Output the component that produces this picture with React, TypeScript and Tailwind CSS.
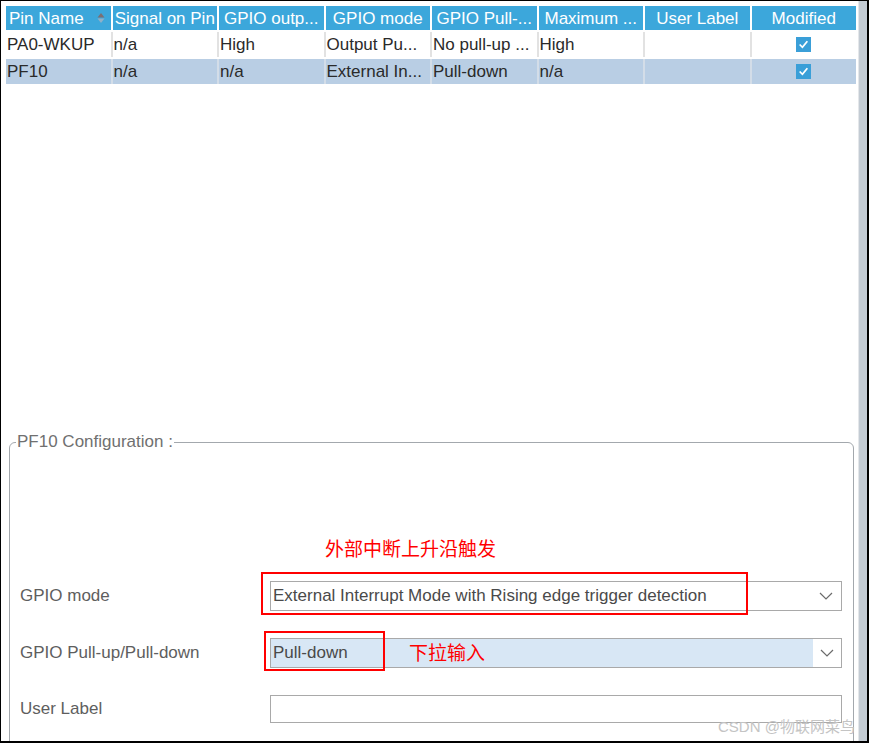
const headers = [
  "Signal on Pin",
  "GPIO outp...",
  "GPIO mode",
  "GPIO Pull-...",
  "Maximum ...",
  "User Label",
  "Modified",
];

const rows = [
  { cells: ["PA0-WKUP", "n/a", "High", "Output Pu...", "No pull-up ...", "High", ""], bg: "bg-white", sep: "bg-[#e2e2e2]" },
  { cells: ["PF10", "n/a", "n/a", "External In...", "Pull-down", "n/a", ""], bg: "bg-[#b9cee4]", sep: "bg-[#d3dde8]" },
];

const SortIcon = () => (
  <svg width="8" height="12" viewBox="0 0 8 12">
    <polygon points="4,1 7.5,5.5 0.5,5.5" fill="#7d6f72" />
    <polygon points="0.5,6.5 7.5,6.5 4,11" fill="#8fb0c8" />
  </svg>
);

const Check = () => (
  <div className="w-[15px] h-[15px] bg-[#3a9fd8] flex items-center justify-center">
    <svg width="11" height="11" viewBox="0 0 10 10">
      <polyline points="1.5,5 4,7.5 8.5,2" fill="none" stroke="white" strokeWidth="1.6" />
    </svg>
  </div>
);

const Chevron = () => (
  <svg width="14" height="8" viewBox="0 0 14 8">
    <polyline points="1,1 7,7 13,1" fill="none" stroke="#6b6b6b" strokeWidth="1.2" />
  </svg>
);

export default function App() {
  return (
    <div
      className="relative w-[869px] h-[743px] bg-white border border-black border-r-2 border-b-2 flex overflow-hidden"
      style={{ fontFamily: '"Liberation Sans", Arial, sans-serif' }}
    >
      <div className="flex-1 flex flex-col pt-[5px]">
        {/* table */}
        <div className="ml-[5px] w-[850px] flex flex-col gap-y-[2px] text-[17px]">
          <div className="grid grid-cols-8 gap-x-[2px] h-[24px]">
            <div className="bg-[#3ca7db] text-white flex items-center justify-between pl-[3px] pr-[6px] leading-none">
              <span>Pin Name</span>
              <SortIcon />
            </div>
            {headers.map((h) => (
              <div
                key={h}
                className="bg-[#3ca7db] text-white flex items-center justify-center overflow-hidden whitespace-nowrap leading-none"
              >
                {h}
              </div>
            ))}
          </div>
          {rows.map((r, i) => (
            <div key={i} className={`grid grid-cols-8 gap-x-[2px] h-[25px] ${r.sep}`}>
              {r.cells.map((c, j) => (
                <div
                  key={j}
                  className={`${r.bg} text-[#2a2a2a] flex items-center pl-[1px] overflow-hidden whitespace-nowrap leading-none`}
                >
                  {c}
                </div>
              ))}
              <div className={`${r.bg} flex items-center justify-center`}>
                <Check />
              </div>
            </div>
          ))}
        </div>

        {/* configuration group */}
        <fieldset className="ml-[8px] mt-[349px] w-[845px] h-[330px] border border-[#a3a8ad] rounded-t-[6px] p-0 m-0 shrink-0">
          <legend className="ml-[6px] px-[1px] text-[17px] leading-[18px] text-[#707070]">
            PF10 Configuration :
          </legend>
          <div className="pt-[130px] pl-[10px] flex flex-col gap-y-[27px] text-[17px] text-[#5e5e5e]">
            <div className="flex items-center h-[30px]">
              <div className="w-[250px]">GPIO mode</div>
              <div className="w-[572px] h-[30px] border border-[#a9a9a9] bg-white flex items-center justify-between pl-[2px] pr-[8px] text-[#4a4a4a]">
                <span>External Interrupt Mode with Rising edge trigger detection</span>
                <Chevron />
              </div>
            </div>
            <div className="flex items-center h-[30px]">
              <div className="w-[250px]">GPIO Pull-up/Pull-down</div>
              <div className="w-[572px] h-[30px] border border-[#a9a9a9] bg-white flex text-[#4a4a4a]">
                <div className="flex-1 bg-[#d8e7f5] flex items-center pl-[2px]">Pull-down</div>
                <div className="w-[28px] flex items-center justify-center">
                  <Chevron />
                </div>
              </div>
            </div>
            <div className="flex items-center h-[28px]">
              <div className="w-[250px]">User Label</div>
              <div className="w-[572px] h-[28px] border border-[#a9a9a9] bg-white" />
            </div>
          </div>
        </fieldset>
      </div>

      {/* right scrollbar strip */}
      <div className="w-[9px] flex">
        <div className="w-[1px] bg-[#e4e7ea]" />
        <div className="flex-1 bg-[#c3cbd3]" />
      </div>

      {/* annotations */}
      <div
        className="absolute left-[324px] top-[535px] text-[19px] leading-[24px] text-[#ff0000] whitespace-nowrap"
        style={{ fontFamily: '"Noto Sans CJK SC", sans-serif' }}
      >
        外部中断上升沿触发
      </div>
      <div className="absolute left-[260px] top-[571px] w-[487px] h-[43px] border-2 border-[#ff0000]" />
      <div className="absolute left-[263px] top-[630px] w-[121px] h-[40px] border-2 border-[#ff0000]" />
      <div
        className="absolute left-[408px] top-[639px] text-[19px] leading-[24px] text-[#ff0000] whitespace-nowrap"
        style={{ fontFamily: '"Noto Sans CJK SC", sans-serif' }}
      >
        下拉输入
      </div>
      <div
        className="absolute left-[717px] top-[716px] text-[15px] leading-[20px] text-[#c4c4c4] whitespace-nowrap"
        style={{ fontFamily: '"Liberation Sans", "Noto Sans CJK SC", sans-serif' }}
      >
        CSDN @物联网菜鸟
      </div>
    </div>
  );
}
